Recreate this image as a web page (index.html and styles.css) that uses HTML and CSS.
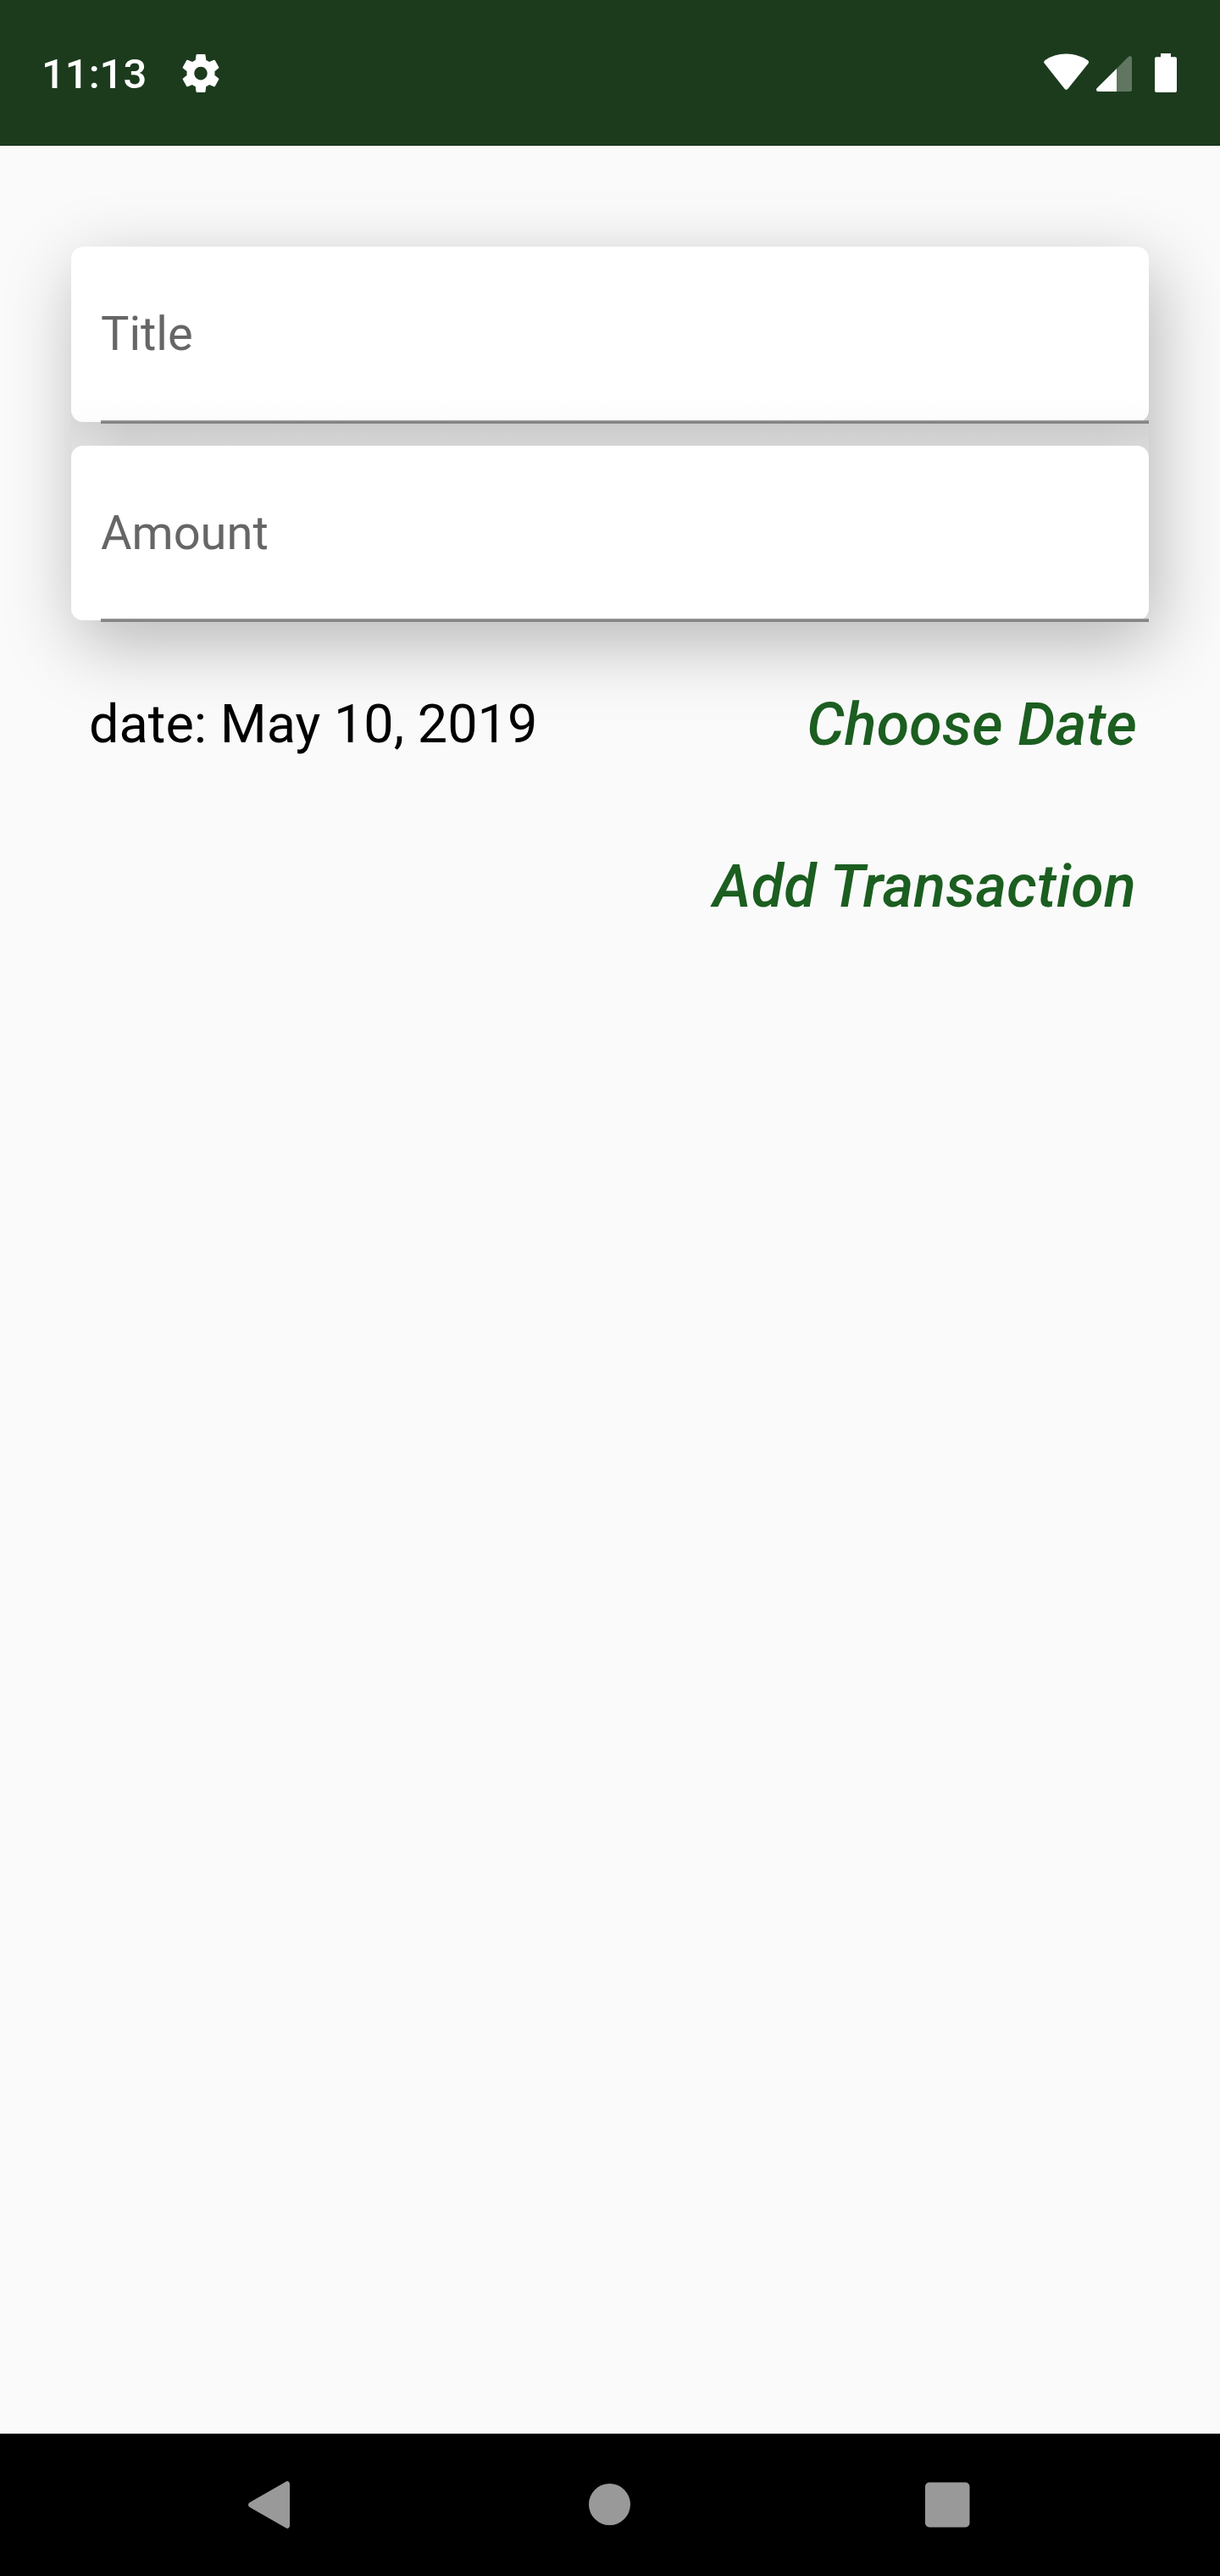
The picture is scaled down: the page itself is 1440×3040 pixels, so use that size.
FILE: index.html
```html
<!DOCTYPE html>
<html lang="en">
<head>
<meta charset="utf-8">
<title>Add Transaction</title>
<link rel="stylesheet" href="styles.css">
</head>
<body>
<header class="status-bar">
  <span class="clock">11:13</span>
  <svg class="gear" viewBox="2 2 20 20" preserveAspectRatio="none" aria-hidden="true"><path fill="#fff" d="M19.43 12.98c.04-.32.07-.64.07-.98s-.03-.66-.07-.98l2.11-1.65c.19-.15.24-.42.12-.64l-2-3.46c-.12-.22-.39-.3-.61-.22l-2.49 1c-.52-.4-1.08-.73-1.69-.98l-.38-2.65C14.46 2.18 14.25 2 14 2h-4c-.25 0-.46.18-.49.42l-.38 2.65c-.61.25-1.17.59-1.69.98l-2.49-1c-.23-.09-.49 0-.61.22l-2 3.46c-.13.22-.07.49.12.64l2.11 1.65c-.04.32-.07.65-.07.98s.03.66.07.98l-2.11 1.65c-.19.15-.24.42-.12.64l2 3.46c.12.22.39.3.61.22l2.49-1c.52.4 1.08.73 1.69.98l.38 2.65c.03.24.24.42.49.42h4c.25 0 .46-.18.49-.42l.38-2.65c.61-.25 1.17-.59 1.69-.98l2.49 1c.23.09.49 0 .61-.22l2-3.46c.12-.22.07-.49-.12-.64l-2.11-1.65zM12 15.500c-1.930 0-3.500-1.570-3.500-3.500s1.570-3.500 3.500-3.500 3.500 1.570 3.500 3.500-1.570 3.500-3.500 3.500z"/></svg>
  <svg class="radios" width="158" height="48" viewBox="1232 62 158 48" aria-hidden="true">
    <path fill="#fff" d="M1233 75Q1231.200 73 1233.300 71.300Q1244 63.600 1258.500 63.600T1284 71.300Q1286 73 1284.400 75L1260.500 104.800Q1258.500 107 1256.500 104.800Z"/>
    <path fill="#fff" fill-opacity=".3" d="M1318 81L1331.800 67Q1333 66 1334.500 66.300Q1336 67 1336 68.500V105.500Q1336 108 1333.500 108H1318Z"/>
    <path fill="#fff" d="M1318 81V108H1296.500Q1294 108 1294 105.500Q1294 104.700 1294.800 104Z"/>
    <path fill="#fff" d="M1370 63H1382V67.300H1387Q1389 67.300 1389 69.300V107Q1389 109 1387 109H1365Q1363 109 1363 107V69.300Q1363 67.300 1365 67.300H1370Z"/>
  </svg>
</header>
<main class="form">
  <div class="fields">
    <div class="field field-title"><label class="field-label">Title</label></div>
    <div class="field"><label class="field-label">Amount</label></div>
  </div>
  <div class="date-row">
    <span class="date">date: May 10, 2019</span>
    <span class="action">Choose Date</span>
  </div>
  <div class="submit-row"><span class="action">Add Transaction</span></div>
</main>
<nav class="nav-bar">
  <svg class="nav-icons" width="852" height="56" viewBox="293 2928 852 56" fill="#999" aria-hidden="true">
    <path d="M337 2928.900Q339 2927.500 340.500 2928.500Q342 2929.500 342 2931.500V2980.500Q342 2982.500 340.500 2983.500Q339 2984.500 337 2983.100L295 2959Q293 2958 293 2956T295 2953Z"/>
    <circle cx="719.500" cy="2955.500" r="24.500"/>
    <rect x="1092" y="2929.500" width="52.500" height="53" rx="5"/>
  </svg>
</nav>
</body>
</html>
```
FILE: styles.css
```css
* {
  box-sizing: border-box;
}

body {
  margin: 0;
  height: 3040px;
  display: flex;
  flex-direction: column;
  background: #fafafa;
  font-family: Roboto, sans-serif;
}

.status-bar {
  height: 172px;
  flex: none;
  display: flex;
  align-items: flex-start;
  padding: 62px 50px 0 49px;
  background: #1c3b1d;
  border-bottom: 1px solid #17301a;
}

.clock {
  width: 166px;
  font-size: 49px;
  font-weight: 500;
  line-height: 52px;
  color: #fff;
}

.gear {
  width: 44px;
  height: 45px;
  margin-top: 2px;
}

.radios {
  margin-left: auto;
}

.form {
  flex: 1;
  padding: 119px 84px 0;
}

.fields {
  display: flex;
  flex-direction: column;
  gap: 28px;
  height: 441px;
  border-radius: 14px;
  background:
    linear-gradient(rgba(250, 250, 250, 0) 206px, rgba(250, 250, 250, .2) 234px),
    linear-gradient(90deg, #d9d9d9, #cbcbcb 5%, #cbcbcb 96%, #d0d0d0);
  box-shadow: 8px 26px 86px rgba(0, 0, 0, .28);
}

.field {
  flex: 1;
  position: relative;
  display: flex;
  align-items: center;
  padding-left: 35px;
  border-radius: 14px;
  background: #fff;
}

.field-title {
  background: linear-gradient(#fff 85%, #fcfcfc);
}

/* Underline that straddles the bottom edge of the card */
.field::after {
  content: "";
  position: absolute;
  left: 35px;
  right: 0;
  bottom: -2px;
  height: 4px;
  background: linear-gradient(#a2a2a2, #7f7f7f 60%, #8c8c8c);
}

.field-label {
  font-size: 56px;
  line-height: 66px;
  color: #666;
}

.date-row {
  display: flex;
  align-items: flex-start;
  justify-content: space-between;
  padding: 82px 14px 0 21px;
}

.date {
  font-size: 63px;
  line-height: 82px;
  color: #000;
}

.action {
  font-size: 70px;
  font-weight: 500;
  font-style: italic;
  line-height: 82px;
  letter-spacing: .2px;
  color: #1b5e20;
}

.submit-row {
  display: flex;
  justify-content: flex-end;
  padding: 109px 15px 0 0;
}

.nav-bar {
  height: 168px;
  flex: none;
  padding: 56px 0 0 293px;
  background: #000;
}

.nav-icons {
  display: block;
}
```
